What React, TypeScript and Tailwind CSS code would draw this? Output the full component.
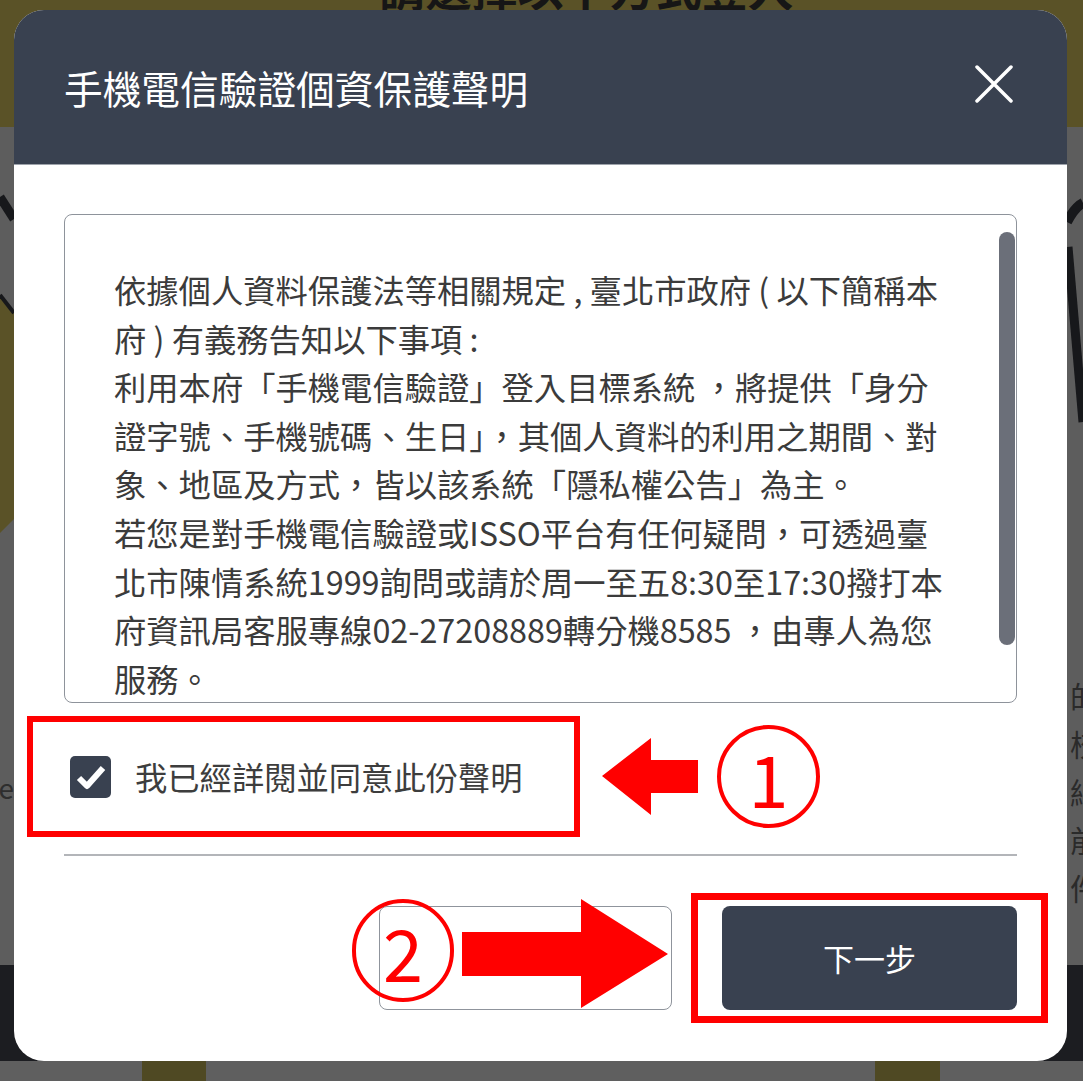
const noticeLines = [
  "依據個人資料保護法等相關規定 , 臺北市政府 ( 以下簡稱本",
  "府 ) 有義務告知以下事項 :",
  "利用本府「手機電信驗證」登入目標系統 ，將提供「身分",
  "證字號、手機號碼、生日」，其個人資料的利用之期間、對",
  "象、地區及方式，皆以該系統「隱私權公告」為主。",
  "若您是對手機電信驗證或ISSO平台有任何疑問，可透過臺",
  "北市陳情系統1999詢問或請於周一至五8:30至17:30撥打本",
  "府資訊局客服專線02-27208889轉分機8585 ，由專人為您",
  "服務。",
];

function Backdrop() {
  return (
    <div className="flex h-full flex-col">
      {/* page heading band (mostly hidden under the dialog) */}
      <div className="flex h-[127px] shrink-0 justify-center overflow-hidden bg-[#5a5227]">
        <p className="-mt-[44px] ml-[90px] whitespace-nowrap text-[46px] font-bold leading-[60px] text-[#161616]">
          請選擇以下方式登入
        </p>
      </div>

      <div className="flex flex-1 justify-between">
        {/* left edge of the illustration */}
        <div className="flex w-[14px] flex-col">
          <svg width="14" height="640" viewBox="0 0 14 640">
            <path d="M0 70 L14 92" stroke="#17181b" strokeWidth="9" />
            <polygon points="0,168 14,186 14,392 0,406" fill="#5a5227" />
            <path d="M0 168 L14 186" stroke="#17181b" strokeWidth="4" />
          </svg>
          <div className="flex justify-end">
            <span className="whitespace-nowrap text-[28px] leading-[40px] text-[#2e2e2e]">Welcome</span>
          </div>
        </div>

        {/* right edge of the illustration + text column */}
        <div className="flex w-[16px] flex-col overflow-hidden">
          <svg width="16" height="300" viewBox="0 0 16 300">
            <path d="M0 95 Q8 80 16 76" stroke="#17181b" strokeWidth="10" fill="none" />
            <path d="M1 120 L16 295" stroke="#17181b" strokeWidth="9" />
          </svg>
          <div className="mt-[244px] flex flex-col pl-[3px] text-[30px] leading-[48px] text-[#2a2a2a]">
            <span className="whitespace-nowrap">的</span>
            <span className="whitespace-nowrap">校</span>
            <span className="whitespace-nowrap">細</span>
            <span className="whitespace-nowrap">前</span>
            <span className="whitespace-nowrap">件</span>
          </div>
        </div>
      </div>

      <div className="h-[96px] shrink-0 bg-[#1c1d21]" />
      <div className="flex h-[20px] shrink-0 bg-[#5f5f5f]">
        <div className="ml-[142px] w-[64px] bg-[#4f4923]" />
        <div className="ml-[669px] w-[65px] bg-[#4f4923]" />
      </div>
    </div>
  );
}

function CircledNumber({ n, size }: { n: string; size: string }) {
  return (
    <div
      className={`flex shrink-0 items-center justify-center rounded-full border-[4px] border-[#ff0000] ${size}`}
    >
      <span className="text-[72px] leading-none text-[#ff0000]">{n}</span>
    </div>
  );
}

function Modal() {
  return (
    <div className="absolute left-[14px] top-[10px] flex h-[1051px] w-[1053px] flex-col overflow-hidden rounded-[30px] bg-white">
      {/* Header */}
      <div className="flex h-[155px] shrink-0 items-center justify-between border-b border-[#9ea3ab] bg-[#394150] pl-[50px] pr-[53px]">
        <h1 className="text-[38.7px] font-normal leading-none text-white">手機電信驗證個資保護聲明</h1>
        <button aria-label="close" className="-mt-[6px] flex h-[40px] w-[40px] items-center justify-center">
          <svg width="38" height="38" viewBox="0 0 38 38">
            <path d="M2 2 L36 36 M36 2 L2 36" stroke="white" strokeWidth="3.5" strokeLinecap="round" />
          </svg>
        </button>
      </div>

      {/* Body */}
      <div className="flex flex-1 flex-col px-[50px]">
        {/* Scrollable notice */}
        <div className="mt-[49px] flex h-[489px] shrink-0 overflow-hidden rounded-[8px] border border-[#8e939b]">
          <div className="flex-1 pl-[49px] pt-[50px] text-[32.3px] leading-[48.6px] text-[#3b3b3b]">
            {noticeLines.map((line) => (
              <p key={line} className="whitespace-nowrap">
                {line}
              </p>
            ))}
          </div>
          <div className="mr-[1px] mt-[17px] h-[413px] w-[16px] shrink-0 rounded-full bg-[#6b6f79]" />
        </div>

        {/* Agree checkbox with annotation ① */}
        <div className="-ml-[37px] mt-[13px] flex items-center">
          <div className="flex h-[121px] w-[553px] shrink-0 items-center gap-[24px] border-[6px] border-[#ff0000] pl-[37px]">
            <div className="flex h-[42px] w-[41px] items-center justify-center rounded-[5px] bg-[#394150]">
              <svg width="34" height="34" viewBox="0 0 34 34">
                <path d="M5 18 L13 26 L29 8" stroke="white" strokeWidth="6" fill="none" strokeLinejoin="round" />
              </svg>
            </div>
            <span className="text-[32.3px] leading-none text-[#3d3d3d]">我已經詳閱並同意此份聲明</span>
          </div>
          <svg className="ml-[22px] shrink-0" width="96" height="78" viewBox="0 0 96 78">
            <polygon points="0,38 49,0 49,22 96,22 96,55 49,55 49,77" fill="#ff0000" />
          </svg>
          <div className="ml-[19px]">
            <CircledNumber n="1" size="h-[103px] w-[103px]" />
          </div>
        </div>

        <div className="mt-[17px] h-[2px] shrink-0 bg-[#b3b5b9]" />

        {/* Buttons with annotation ② */}
        <div className="-mr-[31px] mt-[37px] flex items-center justify-end">
          <div className="relative h-[104px] w-[293px] rounded-[8px] border-[1.5px] border-[#8f949c] bg-white">
            <div className="absolute -left-[28px] -top-[8px]">
              <CircledNumber n="2" size="h-[103px] w-[102px]" />
            </div>
            <svg className="absolute -top-[8px] left-[82px]" width="206" height="109" viewBox="0 0 206 109">
              <polygon points="0,33 119,33 119,0 206,55 119,109 119,77 0,77" fill="#ff0000" />
            </svg>
          </div>
          <div className="ml-[19px] border-[7px] border-[#ff0000] px-[24px] py-[6px]">
            <button className="flex h-[104px] w-[295px] items-center justify-center rounded-[8px] bg-[#394150] text-[31px] text-white">
              下一步
            </button>
          </div>
        </div>
      </div>
    </div>
  );
}

export default function App() {
  return (
    <div className="relative h-[1081px] w-[1083px] overflow-hidden bg-[#5d5d5d] font-['Noto_Sans_CJK_TC',sans-serif]">
      <Backdrop />
      <Modal />
    </div>
  );
}
